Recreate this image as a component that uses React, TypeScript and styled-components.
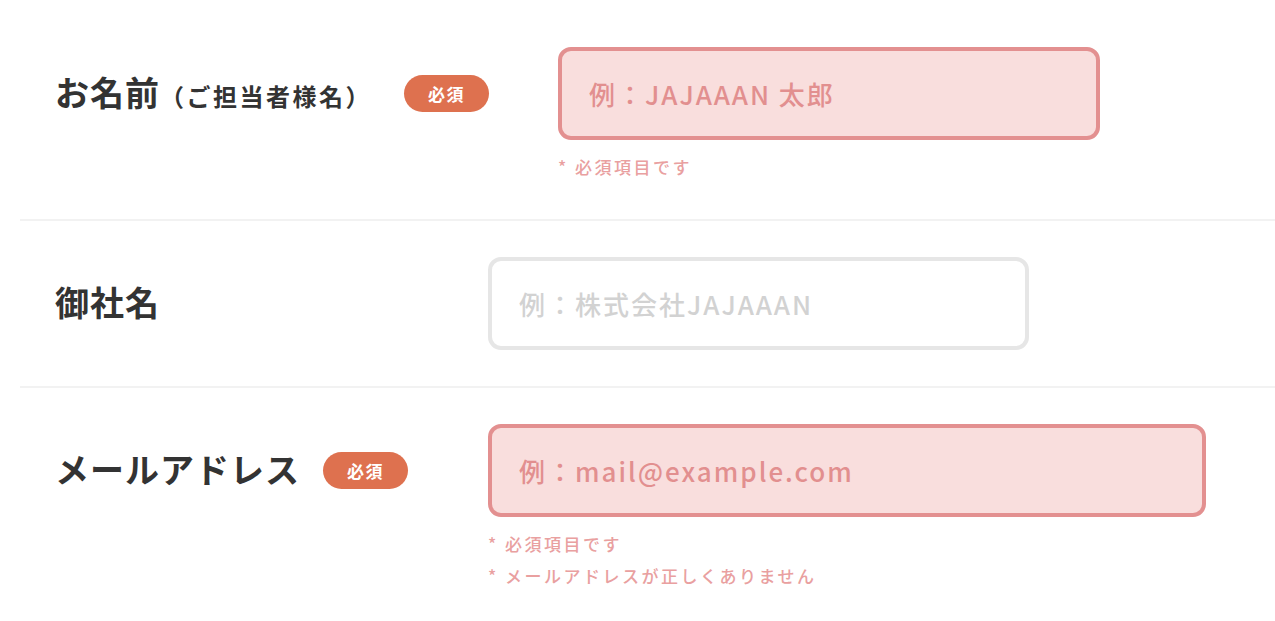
import React from "react";
import styled, { createGlobalStyle } from "styled-components";

const GlobalStyle = createGlobalStyle`
  html, body {
    margin: 0;
    padding: 0;
    background: #ffffff;
  }
  body {
    font-family: "Noto Sans CJK JP", "Noto Sans", sans-serif;
    color: #333333;
  }
`;

const Form = styled.form`
  margin-left: 20px;
  padding-top: 11px;
`;

const Row = styled.div<{ $last?: boolean }>`
  display: flex;
  align-items: flex-start;
  padding: 36px 0 36px 35px;
  border-bottom: ${(p) => (p.$last ? "none" : "2px solid #f2f2f2")};
`;

const LabelCell = styled.div<{ $width: number }>`
  display: flex;
  align-items: center;
  flex: 0 0 ${(p) => p.$width}px;
  height: 93px;
`;

const LabelText = styled.label`
  font-size: 34px;
  font-weight: 700;
  letter-spacing: 1px;
  color: #333333;
  line-height: 1;
  margin-top: -3px;
`;

const LabelNote = styled.span`
  font-size: 24px;
  letter-spacing: 2.5px;
`;

const Badge = styled.span<{ $gap: number }>`
  display: inline-flex;
  align-items: center;
  justify-content: center;
  width: 85px;
  height: 37px;
  margin-left: ${(p) => p.$gap}px;
  border-radius: 19px;
  background: #de714f;
  color: #ffffff;
  font-size: 17px;
  font-weight: 700;
  letter-spacing: 1.5px;
`;

const Field = styled.div`
  display: flex;
  flex-direction: column;
`;

const Input = styled.input<{ $error?: boolean; $width: number }>`
  box-sizing: border-box;
  width: ${(p) => p.$width}px;
  height: 93px;
  padding: 0 27px;
  border: 4px solid ${(p) => (p.$error ? "#e39090" : "#e6e6e6")};
  border-radius: 13px;
  background: ${(p) => (p.$error ? "#f9dedd" : "#ffffff")};
  font-family: "Noto Sans CJK JP", "Noto Sans", sans-serif;
  font-size: 26px;
  font-weight: 500;
  letter-spacing: 2px;
  outline: none;

  &::placeholder {
    color: ${(p) => (p.$error ? "#e28f8f" : "#d2d2d2")};
    opacity: 1;
  }
`;

const Errors = styled.ul`
  list-style: none;
  margin: 11px 0 0;
  padding: 0;
`;

const ErrorItem = styled.li`
  line-height: 32px;
  font-size: 17px;
  font-weight: 500;
  letter-spacing: 2.5px;
  color: #e9a0a0;
`;

export default function App() {
  return (
    <>
      <GlobalStyle />
      <Form>
        <Row>
          <LabelCell $width={503}>
            <LabelText>
              お名前<LabelNote>（ご担当者様名）</LabelNote>
            </LabelText>
            <Badge $gap={32}>必須</Badge>
          </LabelCell>
          <Field>
            <Input $error $width={542} placeholder="例：JAJAAAN 太郎" />
            <Errors>
              <ErrorItem>* 必須項目です</ErrorItem>
            </Errors>
          </Field>
        </Row>
        <Row>
          <LabelCell $width={433}>
            <LabelText>御社名</LabelText>
          </LabelCell>
          <Field>
            <Input $width={541} placeholder="例：株式会社JAJAAAN" />
          </Field>
        </Row>
        <Row $last>
          <LabelCell $width={433}>
            <LabelText>メールアドレス</LabelText>
            <Badge $gap={23}>必須</Badge>
          </LabelCell>
          <Field>
            <Input $error $width={718} placeholder="例：mail@example.com" />
            <Errors>
              <ErrorItem>* 必須項目です</ErrorItem>
              <ErrorItem>* メールアドレスが正しくありません</ErrorItem>
            </Errors>
          </Field>
        </Row>
      </Form>
    </>
  );
}
